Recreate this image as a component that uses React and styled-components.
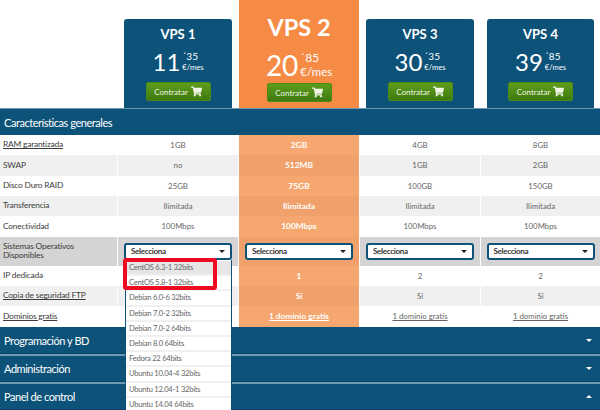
import React from 'react'
import styled, { createGlobalStyle } from 'styled-components'
import { FaShoppingCart } from 'react-icons/fa'

const GlobalStyle = createGlobalStyle`
	html, body {
		margin: 0;
		padding: 0;
		background: #fff;
		height: 410px;
		overflow: hidden;
		font-family: Lato, "Open Sans", sans-serif;
	}
	* { box-sizing: border-box; }
`

const columns = '117px 120px 120px 120px 119px'

const Page = styled.div`
	position: relative;
	width: 600px;
	height: 410px;
	overflow: hidden;
`
const Plans = styled.div`
	display: grid;
	grid-template-columns: ${columns};
	column-gap: 1px;
	height: 108px;
	align-items: end;
`
const Plan = styled.div`
	display: flex;
	flex-direction: column;
	align-items: center;
	color: #fff;
	height: ${p => (p.$featured ? '108px' : '89px')};
	margin: ${p => (p.$featured ? '0' : '0 6px')};
	padding-top: ${p => (p.$featured ? '12px' : '5px')};
	background: ${p => (p.$featured ? '#f68b45' : '#0d5279')};
	border-radius: ${p => (p.$featured ? '0' : '3px 3px 0 0')};
`
const PlanName = styled.div`
	font-size: ${p => (p.$featured ? '23.5px' : '13px')};
	line-height: ${p => (p.$featured ? '30px' : '20px')};
	font-weight: 700;
`
const Price = styled.div`
	display: flex;
	align-items: center;
	height: 30px;
	margin-top: ${p => (p.$featured ? '8px' : '3px')};
	gap: 2px;
`
const Amount = styled.div`
	font-size: ${p => (p.$featured ? '28px' : '24px')};
	line-height: 30px;
`
const Cents = styled.div`
	display: flex;
	flex-direction: column;
	font-size: ${p => (p.$featured ? '11.4px' : '7.6px')};
	line-height: ${p => (p.$featured ? '14px' : '11px')};
`
const CentsValue = styled.span`
	font-size: ${p => (p.$featured ? '12px' : '10px')};
`
const BuyButton = styled.div`
	display: flex;
	align-items: center;
	justify-content: center;
	gap: 3px;
	width: 65px;
	height: 19px;
	margin-top: ${p => (p.$featured ? '3px' : '5px')};
	color: #f0f5e6;
	font-size: 8px;
	border-radius: 2px;
	border: 1px solid #4c8a18;
	background: linear-gradient(#5f9d1c, #3f7a10);
	svg {
		width: 11px;
		height: 11px;
	}
`
const SectionBar = styled.div`
	display: flex;
	align-items: center;
	justify-content: space-between;
	height: 27px;
	padding: 0 8px 0 4px;
	color: #fff;
	font-size: 11px;
	letter-spacing: -0.45px;
	background: #0d5279;
`
const TopBar = styled(SectionBar)`
	border-top: 1px solid #6f9ab5;
`
const AccordionBar = styled(SectionBar)`
	height: ${p => (p.$first ? '27px' : '28px')};
	border-top: ${p => (p.$first ? 'none' : '2px solid #6f9ab5')};
	border-bottom: 1px solid #0a4263;
`
const Features = styled.div`
	height: 192px;
`
const Row = styled.div`
	display: grid;
	grid-template-columns: ${columns};
	column-gap: 1px;
	height: ${p => (p.$tall ? '29px' : '20.33px')};
	background: #fff;
`
const Cell = styled.div`
	display: flex;
	align-items: center;
	justify-content: center;
	font-size: 7.8px;
	color: #666;
	background: ${p => p.$bg};
`
const LabelCell = styled(Cell)`
	justify-content: flex-start;
	padding: 0 20px 0 3px;
	font-size: 8.4px;
	line-height: 9.5px;
	letter-spacing: -0.2px;
	color: #3c3c3c;
	text-decoration: ${p => (p.$underline ? 'underline' : 'none')};
`
const FeaturedCell = styled(Cell)`
	font-size: 8.4px;
	font-weight: 700;
	color: #fff;
`
const LinkText = styled.span`
	text-decoration: underline;
`
const SelectBox = styled.div`
	display: flex;
	align-items: center;
	justify-content: space-between;
	width: 108px;
	height: 17px;
	padding: 0 5px;
	color: #333;
	font-size: 8px;
	letter-spacing: -0.3px;
	font-weight: 700;
	background: #fff;
	border: 2px solid #0d5279;
	border-radius: 3px;
`
const Arrow = styled.span`
	width: 0;
	height: 0;
	border-left: ${p => p.$size}px solid transparent;
	border-right: ${p => p.$size}px solid transparent;
	${p => (p.$up ? 'border-bottom' : 'border-top')}: ${p => p.$size}px solid ${p => p.$color};
`
const Accordions = styled.div`
	display: flex;
	flex-direction: column;
`
const Dropdown = styled.div`
	position: absolute;
	left: 125px;
	top: 260px;
	width: 107px;
	padding-top: 1px;
	background: #fff;
	border-left: 1px solid #0d5279;
	border-right: 1px solid #0d5279;
`
const Option = styled.div`
	height: 15.2px;
	line-height: 13.2px;
	padding-left: 3px;
	font-size: 7.6px;
	letter-spacing: -0.25px;
	color: #666;
	background: ${p => (p.$active ? '#e6e6e6' : '#fff')};
	border-bottom: 2px solid #f0f0f0;
`
const Highlight = styled.div`
	position: absolute;
	left: 123px;
	top: 258px;
	width: 94px;
	height: 32px;
	border: 4px solid #ee0a20;
	border-radius: 3px;
`

const plans = [
	{ name: 'VPS 1', euros: '11', cents: '35' },
	{ name: 'VPS 2', euros: '20', cents: '85', featured: true },
	{ name: 'VPS 3', euros: '30', cents: '35' },
	{ name: 'VPS 4', euros: '39', cents: '85' },
]

// the first plan's last three rows sit under the open dropdown
const rows = [
	{ label: 'RAM garantizada', underline: true, values: ['1GB', '2GB', '4GB', '8GB'] },
	{ label: 'SWAP', values: ['no', '512MB', '1GB', '2GB'] },
	{ label: 'Disco Duro RAID', values: ['25GB', '75GB', '100GB', '150GB'] },
	{ label: 'Transferencia', values: ['Ilimitada', 'Ilimitada', 'Ilimitada', 'Ilimitada'] },
	{ label: 'Conectividad', values: ['100Mbps', '100Mbps', '100Mbps', '100Mbps'] },
	{ label: 'Sistemas Operativos Disponibles', select: true },
	{ label: 'IP dedicada', values: ['', '1', '2', '2'] },
	{ label: 'Copia de seguridad FTP', underline: true, values: ['', 'Sí', 'Sí', 'Sí'] },
	{ label: 'Dominios gratis', underline: true, link: true, values: ['', '1 dominio gratis', '1 dominio gratis', '1 dominio gratis'] },
]

const options = [
	'CentOS 6.3-1 32bits',
	'CentOS 5.8-1 32bits',
	'Debian 6.0-6 32bits',
	'Debian 7.0-2 32bits',
	'Debian 7.0-2 64bits',
	'Debian 8.0 64bits',
	'Fedora 22 64bits',
	'Ubuntu 10.04-4 32bits',
	'Ubuntu 12.04-1 32bits',
	'Ubuntu 14.04 64bits',
]

const stripe = (row, i) => (row.select ? '#d4d4d4' : i % 2 ? '#f0f0f0' : '#fff')
const orange = i => (i % 2 ? '#f0a06a' : '#f5a76f')

function App() {
	return (
		<Page>
			<GlobalStyle />
			<Plans>
				<div />
				{plans.map(plan => (
					<Plan key={plan.name} $featured={plan.featured}>
						<PlanName $featured={plan.featured}>{plan.name}</PlanName>
						<Price $featured={plan.featured}>
							<Amount $featured={plan.featured}>{plan.euros}</Amount>
							<Cents $featured={plan.featured}>
								<CentsValue $featured={plan.featured}>´{plan.cents}</CentsValue>
								<span>€/mes</span>
							</Cents>
						</Price>
						<BuyButton $featured={plan.featured}>Contratar <FaShoppingCart /></BuyButton>
					</Plan>
				))}
			</Plans>
			<TopBar>Características generales</TopBar>
			<Features>
				{rows.map((row, i) => (
					<Row key={row.label} $tall={row.select}>
						<LabelCell $bg={stripe(row, i)} $underline={row.underline}>{row.label}</LabelCell>
						{plans.map((plan, c) => {
							const value = row.select
								? <SelectBox>Selecciona <Arrow $size={3} $color="#222" /></SelectBox>
								: row.link ? <LinkText>{row.values[c]}</LinkText> : row.values[c]
							return plan.featured
								? <FeaturedCell key={plan.name} $bg={orange(i)}>{value}</FeaturedCell>
								: <Cell key={plan.name} $bg={stripe(row, i)}>{value}</Cell>
						})}
					</Row>
				))}
			</Features>
			<Accordions>
				<AccordionBar $first>Programación y BD <Arrow $size={3.5} $color="#fff" /></AccordionBar>
				<AccordionBar>Administración <Arrow $size={3.5} $color="#fff" /></AccordionBar>
				<AccordionBar>Panel de control <Arrow $size={3.5} $color="#fff" $up /></AccordionBar>
			</Accordions>
			<Dropdown>
				{options.map((option, i) => <Option key={option} $active={i === 0}>{option}</Option>)}
			</Dropdown>
			<Highlight />
		</Page>
	)
}

export default App
